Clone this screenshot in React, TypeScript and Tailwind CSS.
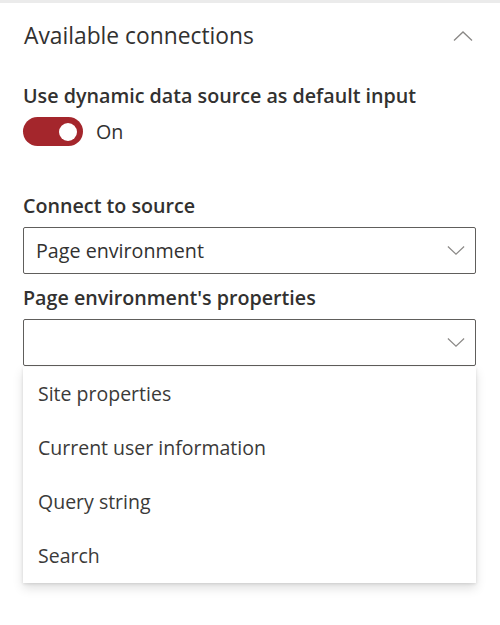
import { useState } from "react";

const font = { fontFamily: '"Open Sans", "Noto Sans", sans-serif' };

const options = ["Site properties", "Current user information", "Query string", "Search"];

function Chevron({ up = false, className = "" }: { up?: boolean; className?: string }) {
  return (
    <svg viewBox="0 0 20 10" className={className} fill="none" stroke="#8a8886" strokeWidth="1.3">
      {up ? <path d="M1 9.5 L10 1 L19 9.5" /> : <path d="M1 0.5 L10 9 L19 0.5" />}
    </svg>
  );
}

function Dropdown({ value }: { value?: string }) {
  return (
    <div className="flex h-[47px] items-center justify-between rounded-[2px] border-[1.5px] border-[#605e5c] bg-white pl-[12px] pr-[10px]">
      <span className="text-[19.7px] text-[#323130]">{value ?? ""}</span>
      <Chevron className="w-[18px] h-[9px]" />
    </div>
  );
}

export default function App() {
  const [on, setOn] = useState(true);

  return (
    <div style={font} className="w-[500px] h-[625px] overflow-hidden bg-white border-t-[3px] border-[#ebebeb]">
      <div className="mt-[18px] flex h-[30px] items-center justify-between pl-[24px] pr-[27px]">
        <span className="text-[22.8px] text-[#323130]">Available connections</span>
        <Chevron up className="w-[20px] h-[10px]" />
      </div>

      <div className="px-[23px] pr-[24px]">
        <div className="mt-[32px] h-[26px] leading-[26px] text-[19.7px] font-semibold text-[#323130]">
          Use dynamic data source as default input
        </div>
        <div className="mt-[8px] flex h-[29px] items-center gap-[13px]">
          <button
            onClick={() => setOn(!on)}
            className="flex h-[29px] w-[60px] items-center justify-end rounded-full bg-[#a4262c] pr-[6px]"
          >
            <span className="block h-[18px] w-[18px] rounded-full bg-white" />
          </button>
          <span className="text-[19.7px] leading-[29px] text-[#323130]">{on ? "On" : "Off"}</span>
        </div>

        <div className="mt-[47px] h-[26px] leading-[26px] text-[19.7px] font-semibold text-[#323130]">
          Connect to source
        </div>
        <div className="mt-[8px]">
          <Dropdown value="Page environment" />
        </div>

        <div className="mt-[11px] h-[26px] leading-[26px] text-[19.7px] font-semibold text-[#323130]">
          Page environment's properties
        </div>
        <div className="mt-[8px]">
          <Dropdown />
        </div>

        <div className="mt-[1px] w-[453px] bg-white shadow-[0_5px_10px_rgba(0,0,0,0.13),0_1px_3px_rgba(0,0,0,0.11)]">
          {options.map((o) => (
            <div key={o} className="flex h-[54px] items-center pl-[15px] text-[19.5px] text-[#3b3a39]">
              {o}
            </div>
          ))}
        </div>
      </div>
    </div>
  );
}
